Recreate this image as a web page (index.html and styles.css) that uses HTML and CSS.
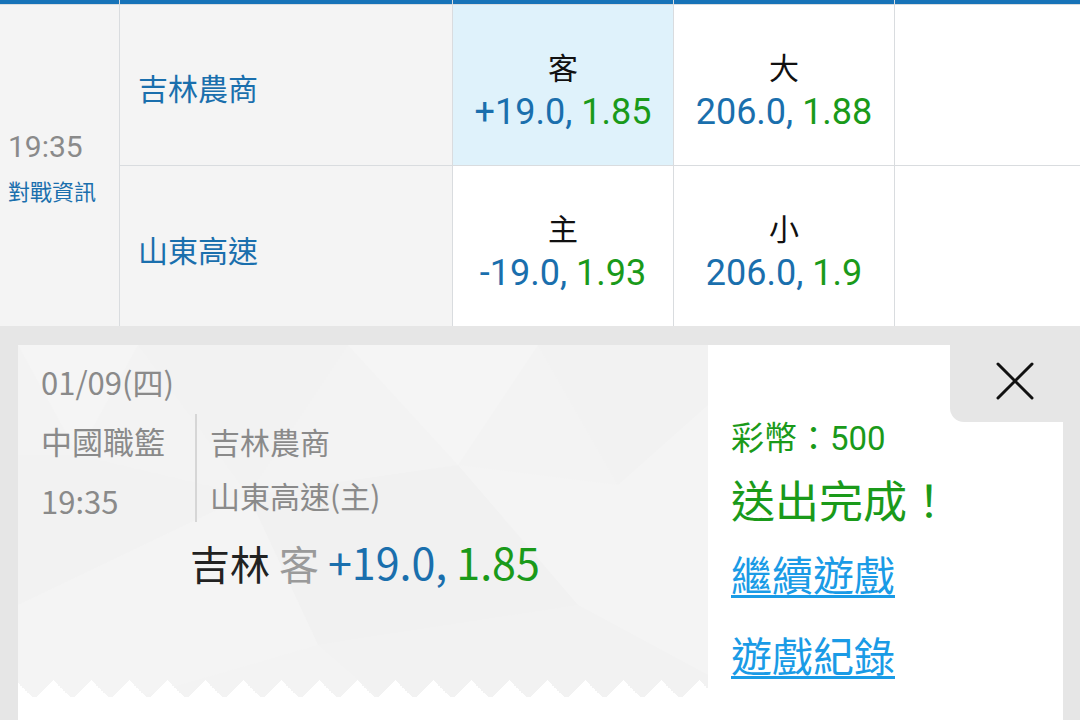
FILE: index.html
```html
<!DOCTYPE html>
<html lang="zh-Hant">
<head>
<meta charset="utf-8">
<title>投注完成</title>
<link rel="stylesheet" href="styles.css">
</head>
<body>
<div class="board">
  <div class="bar"></div><div class="bar"></div><div class="bar"></div><div class="bar"></div><div class="bar"></div>
  <div class="time-cell">
    <div class="time">19:35</div>
    <div class="info">對戰資訊</div>
  </div>
  <div class="team team-top">吉林農商</div>
  <div class="odd odd-top selected">
    <div class="pick">客</div>
    <div class="line"><span class="blue">+19.0,</span> <span class="green">1.85</span></div>
  </div>
  <div class="odd odd-top">
    <div class="pick">大</div>
    <div class="line"><span class="blue">206.0,</span> <span class="green">1.88</span></div>
  </div>
  <div class="empty"></div>
  <div class="team team-bottom">山東高速</div>
  <div class="odd odd-bottom">
    <div class="pick">主</div>
    <div class="line"><span class="blue">-19.0,</span> <span class="green">1.93</span></div>
  </div>
  <div class="odd odd-bottom">
    <div class="pick">小</div>
    <div class="line"><span class="blue">206.0,</span> <span class="green">1.9</span></div>
  </div>
  <div class="empty"></div>
</div>

<div class="sheet">
  <div class="ticket">
    <div class="slip">
      <svg class="facets" viewBox="0 0 690 352" preserveAspectRatio="none" aria-hidden="true">
        <polygon points="0,0 120,0 60,110" fill="#f5f5f5"/>
        <polygon points="120,0 330,0 230,150" fill="#f2f2f2"/>
        <polygon points="330,0 520,0 440,120" fill="#f5f5f5"/>
        <polygon points="520,0 690,0 690,60 600,140" fill="#f2f2f2"/>
        <polygon points="0,110 60,110 230,150 0,260" fill="#f2f2f2"/>
        <polygon points="440,120 600,140 690,60 690,330 560,260" fill="#f4f4f4"/>
        <polygon points="230,150 440,120 560,260 300,300" fill="#f1f1f1"/>
        <polygon points="0,260 230,150 300,300 120,352 0,352" fill="#f4f4f4"/>
        <polygon points="300,300 560,260 690,330 690,352 360,352" fill="#f2f2f2"/>
      </svg>
      <div class="date">01/09(四)</div>
      <div class="match">
        <div class="meta">
          <div class="meta-line">中國職籃</div>
          <div class="meta-line">19:35</div>
        </div>
        <div class="teams">
          <div class="team-line">吉林農商</div>
          <div class="team-line">山東高速(主)</div>
        </div>
      </div>
      <div class="bet"><span class="bet-team">吉林</span> <span class="bet-pick">客</span> <span class="bet-num blue">+19.0,</span> <span class="bet-num green">1.85</span></div>
      <div class="zigzag"></div>
    </div>
    <div class="result">
      <button class="close" type="button" aria-label="關閉">
        <svg viewBox="0 0 40 40" width="40" height="40" aria-hidden="true">
          <path d="M3 3 L37 37 M37 3 L3 37" stroke="#111" stroke-width="3" stroke-linecap="round" fill="none"/>
        </svg>
      </button>
      <div class="coins">彩幣：500</div>
      <div class="done">送出完成！</div>
      <a class="link" href="#">繼續遊戲</a>
      <a class="link" href="#">遊戲紀錄</a>
    </div>
  </div>
</div>
</body>
</html>
```

FILE: styles.css
```css
* { box-sizing: border-box; }

html, body {
  margin: 0;
  padding: 0;
}

body {
  width: 1080px;
  height: 720px;
  overflow: hidden;
  background: #e6e6e6;
  font-family: Roboto, "Noto Sans CJK TC", sans-serif;
}

.blue { color: #1a6fad; }
.green { color: #1a9a1a; }

/* ---------- odds board ---------- */
.board {
  display: grid;
  grid-template-columns: 119px 332px 220px 220px 1fr;
  grid-template-rows: 4px 160px 160px;
  gap: 1px;
  background: #d9dcdf;
}

.bar { background: #1773b8; }

.time-cell {
  grid-row: 2 / span 2;
  background: #f4f4f4;
  display: flex;
  flex-direction: column;
  justify-content: center;
  padding: 0 0 0 8px;
}

.time {
  font-size: 30px;
  line-height: 40px;
  color: #8a8a8a;
}

.info {
  font-family: "Noto Sans CJK TC", sans-serif;
  font-size: 22px;
  line-height: 30px;
  color: #1a6fad;
  margin-top: 8px;
}

.team {
  background: #f4f4f4;
  display: flex;
  align-items: center;
  padding: 4px 0 0 18px;
  font-family: "Noto Sans CJK TC", sans-serif;
  font-size: 30px;
  color: #1a6fad;
}

.team-bottom { padding-top: 6px; }

.odd {
  background: #fff;
  display: flex;
  flex-direction: column;
  align-items: center;
  justify-content: center;
  padding-top: 10px;
}

.odd.selected { background: #dff2fb; }

.pick {
  font-family: "Noto Sans CJK TC", sans-serif;
  font-size: 30px;
  line-height: 40px;
  color: #111;
  margin-bottom: 4px;
}

.line {
  font-size: 36px;
  line-height: 44px;
  white-space: nowrap;
}

.empty { background: #fff; }

/* ---------- confirmation sheet ---------- */
.sheet {
  height: 394px;
  padding: 19px 17px 0 18px;
}

.ticket {
  display: flex;
  height: 375px;
  background: #fff;
}

.slip {
  position: relative;
  width: 690px;
  height: 352px;
  flex: none;
  background: #f3f3f3;
  padding: 16px 0 0 23px;
  font-family: "Noto Sans CJK TC", sans-serif;
  color: #8a8a8a;
}

.facets {
  position: absolute;
  inset: 0;
  width: 100%;
  height: 100%;
}

.date, .match, .bet { position: relative; }

.date {
  font-size: 31px;
  line-height: 42px;
}

.match {
  display: flex;
  align-items: flex-start;
  margin-top: 8px;
}

.meta {
  width: 154px;
  flex: none;
}

.meta-line {
  font-size: 31px;
  line-height: 60px;
}

.teams {
  margin-top: 3px;
  border-left: 2px solid #d6d6d6;
  padding-left: 13px;
}

.team-line {
  font-size: 30px;
  line-height: 54px;
}

.bet {
  margin: 5px 0 0 149px;
  font-size: 40px;
  line-height: 50px;
  white-space: nowrap;
}

.bet-team { color: #222; }
.bet-pick { color: #9a9a9a; }
.bet-num { font-size: 43px; }

.zigzag {
  position: absolute;
  left: 0;
  right: 0;
  bottom: 0;
  height: 17px;
  background: conic-gradient(from 135deg at 50% 0, #fff 90deg, transparent 0) 16px 0 / 38px 17px repeat-x;
}

.result {
  position: relative;
  flex: 1;
  padding: 74px 0 0 23px;
  font-family: "Noto Sans CJK TC", sans-serif;
}

.close {
  position: absolute;
  top: 0;
  right: -17px;
  width: 130px;
  height: 77px;
  border: 0;
  padding: 0;
  background: #e6e6e6;
  border-bottom-left-radius: 14px;
  display: flex;
  align-items: center;
  justify-content: center;
}

.close svg { margin-top: -6px; }

.coins {
  font-family: Roboto, "Noto Sans CJK TC", sans-serif;
  font-size: 33px;
  line-height: 40px;
  color: #1a9a1a;
}

.done {
  margin-top: 13px;
  font-size: 44px;
  line-height: 54px;
  color: #1a9a1a;
}

.link {
  display: block;
  width: max-content;
  margin-top: 20px;
  font-size: 41px;
  line-height: 54px;
  color: #1a9be6;
  text-decoration: underline;
  text-decoration-thickness: 3px;
  text-underline-offset: 4px;
}

.link + .link { margin-top: 27px; }
```
